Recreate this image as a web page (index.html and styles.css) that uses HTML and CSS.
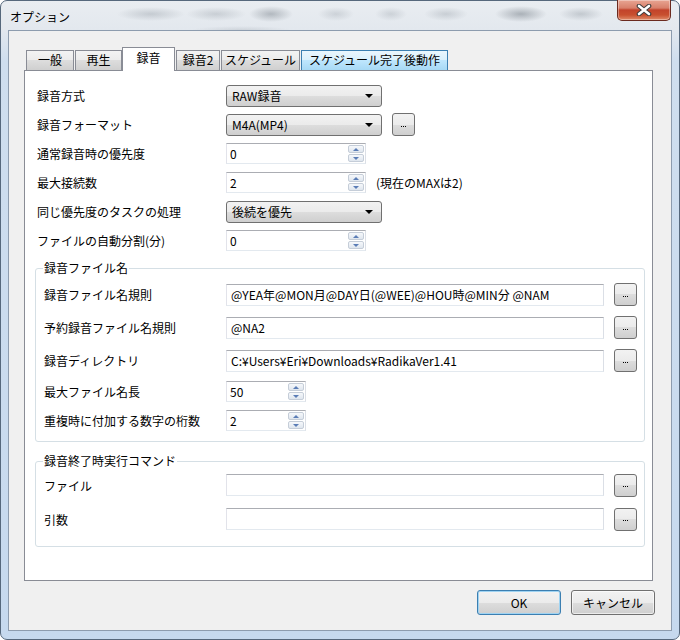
FILE: index.html
```html
<!DOCTYPE html>
<html lang="ja">
<head>
  <meta charset="UTF-8" />
  <title>オプション</title>
  <link rel="stylesheet" href="styles.css">
</head>
<body>

  <div class="window">
    <div class="titlebar">
      <span class="title">オプション</span>
      <button class="close">
        <svg width="16" height="12" viewBox="0 0 16 12">
          <path d="M3 2 L13 10 M13 2 L3 10" stroke="#3b3b3b" stroke-width="4.6" stroke-linecap="round"/>
          <path d="M3 2 L13 10 M13 2 L3 10" stroke="#ffffff" stroke-width="2.6" stroke-linecap="round"/>
        </svg>
      </button>
    </div>

    <div class="client">
      <div class="tabs">
        <div class="tab w-ippan">一般</div>
        <div class="tab w-saisei">再生</div>
        <div class="tab active">録音</div>
        <div class="tab w-rokuon2">録音2</div>
        <div class="tab w-sched">スケジュール</div>
        <div class="tab hover w-after">スケジュール完了後動作</div>
      </div>

      <div class="panel">
        <div class="rows">
          <div class="row">
            <label>録音方式</label>
            <div class="combo">RAW録音</div>
          </div>
          <div class="row">
            <label>録音フォーマット</label>
            <div class="combo">M4A(MP4)</div>
            <button class="dots"><span></span><span></span><span></span></button>
          </div>
          <div class="row">
            <label>通常録音時の優先度</label>
            <div class="spin"><span class="val">0</span><span class="updown"><i class="up"></i><i class="down"></i></span></div>
          </div>
          <div class="row">
            <label>最大接続数</label>
            <div class="spin"><span class="val">2</span><span class="updown"><i class="up"></i><i class="down"></i></span></div>
            <span class="note">(現在のMAXは2)</span>
          </div>
          <div class="row">
            <label>同じ優先度のタスクの処理</label>
            <div class="combo">後続を優先</div>
          </div>
          <div class="row">
            <label>ファイルの自動分割(分)</label>
            <div class="spin"><span class="val">0</span><span class="updown"><i class="up"></i><i class="down"></i></span></div>
          </div>
        </div>

        <fieldset class="group">
          <legend>録音ファイル名</legend>
          <div class="frow">
            <label>録音ファイル名規則</label>
            <div class="text">@YEA年@MON月@DAY日(@WEE)@HOU時@MIN分 @NAM</div>
            <button class="dots"><span></span><span></span><span></span></button>
          </div>
          <div class="frow">
            <label>予約録音ファイル名規則</label>
            <div class="text">@NA2</div>
            <button class="dots"><span></span><span></span><span></span></button>
          </div>
          <div class="frow">
            <label>録音ディレクトリ</label>
            <div class="text">C:¥Users¥Eri¥Downloads¥RadikaVer1.41</div>
            <button class="dots"><span></span><span></span><span></span></button>
          </div>
          <div class="frow short">
            <label>最大ファイル名長</label>
            <div class="spin small"><span class="val">50</span><span class="updown"><i class="up"></i><i class="down"></i></span></div>
          </div>
          <div class="frow short">
            <label>重複時に付加する数字の桁数</label>
            <div class="spin small"><span class="val">2</span><span class="updown"><i class="up"></i><i class="down"></i></span></div>
          </div>
        </fieldset>

        <fieldset class="group second">
          <legend>録音終了時実行コマンド</legend>
          <div class="frow tall">
            <label>ファイル</label>
            <div class="text"></div>
            <button class="dots"><span></span><span></span><span></span></button>
          </div>
          <div class="frow tall">
            <label>引数</label>
            <div class="text"></div>
            <button class="dots"><span></span><span></span><span></span></button>
          </div>
        </fieldset>
      </div>

      <div class="buttons">
        <button class="btn default">OK</button>
        <button class="btn">キャンセル</button>
      </div>
    </div>
  </div>

</body>
</html>
```

FILE: styles.css
```css
* {
  box-sizing: border-box;
}

body {
  margin: 0;
  width: 680px;
  height: 640px;
  overflow: hidden;
  font-family: "Noto Sans CJK JP", sans-serif;
  font-size: 12px;
  color: #000;
  background: #ffffff;
}

button {
  font-family: inherit;
  font-size: 12px;
  color: #000;
  padding: 0;
}

/* window frame (aero glass) */
.window {
  width: 680px;
  height: 640px;
  border: 1px solid #56687c;
  border-radius: 7px;
  padding: 0 7px 8px;
  display: flex;
  flex-direction: column;
  background:
    radial-gradient(ellipse 34px 7px at 150px 13px, rgba(110, 120, 130, 0.28), transparent),
    radial-gradient(ellipse 30px 7px at 215px 13px, rgba(110, 120, 130, 0.25), transparent),
    radial-gradient(ellipse 22px 8px at 270px 13px, rgba(80, 90, 100, 0.35), transparent),
    radial-gradient(ellipse 18px 7px at 335px 13px, rgba(110, 120, 130, 0.22), transparent),
    radial-gradient(ellipse 16px 7px at 390px 13px, rgba(110, 120, 130, 0.22), transparent),
    radial-gradient(ellipse 22px 7px at 445px 13px, rgba(110, 120, 130, 0.25), transparent),
    radial-gradient(ellipse 26px 8px at 520px 13px, rgba(80, 90, 100, 0.4), transparent),
    radial-gradient(ellipse 22px 7px at 580px 13px, rgba(110, 120, 130, 0.3), transparent),
    radial-gradient(ellipse 50px 4px at 240px 29px, rgba(110, 120, 130, 0.18), transparent),
    linear-gradient(#e9edf1 0, #e3e8ee 28px, #cfdeee 60px, #c6d9ee 100%);
}

.titlebar {
  height: 29px;
  display: flex;
  align-items: flex-start;
}

.title {
  margin: 8px 0 0 2px;
  font-size: 12px;
  line-height: 16px;
}

.close {
  margin: -1px 1px 0 auto;
  width: 54px;
  height: 21px;
  border: 1px solid #6b2a1f;
  border-top: none;
  border-radius: 0 0 5px 5px;
  background: linear-gradient(#e8a593 0, #d8806b 40%, #c2432b 50%, #c8502f 75%, #e08c6a 100%);
  box-shadow: inset 0 0 0 1px rgba(255, 255, 255, 0.35);
  display: flex;
  align-items: center;
  justify-content: center;
}

/* client area */
.client {
  flex: 1;
  border: 1px solid #8d9cae;
  background: #f0f0f0;
  display: flex;
  flex-direction: column;
  padding: 16px 18px 15px 15px;
}

.tabs {
  height: 24px;
  margin-bottom: -1px;
  padding-left: 2px;
  display: flex;
  align-items: flex-end;
  position: relative;
  z-index: 1;
}

.tab {
  height: 20px;
  margin: 0 1px 1px 0;
  border: 1px solid #898c95;
  border-bottom: none;
  background: linear-gradient(#f3f3f3, #ebebeb 50%, #dddddd 50%, #cfcfcf);
  text-align: center;
  line-height: 18px;
  white-space: nowrap;
}

.tab.active {
  height: 24px;
  width: 53px;
  margin: 0 1px 0 -1px;
  background: #ffffff;
  line-height: 20px;
  position: relative;
  z-index: 2;
}

.tab.hover {
  border-color: #3c7fb1;
  background: linear-gradient(#eaf6fd, #d9f0fc 50%, #bee6fd 50%, #a7d9f5);
}

.w-ippan { width: 48px; }
.w-saisei { width: 47px; }
.w-rokuon2 { width: 44px; }
.w-sched { width: 79px; }
.w-after { width: 147px; }

.panel {
  flex: 1;
  border: 1px solid #898c95;
  background: #ffffff;
  padding: 10px 7px 0 10px;
}

.rows {
  padding-left: 2px;
}

.row {
  height: 29px;
  display: flex;
  align-items: center;
}

.row label {
  width: 189px;
  flex: none;
}

/* controls */
.combo {
  width: 156px;
  height: 22px;
  border: 1px solid #707070;
  border-radius: 3px;
  background: linear-gradient(#f2f2f2, #ebebeb 50%, #dddddd 50%, #cfcfcf);
  padding-left: 5px;
  line-height: 20px;
  position: relative;
}

.combo::after {
  content: "";
  position: absolute;
  right: 8px;
  top: 8px;
  border-left: 4px solid transparent;
  border-right: 4px solid transparent;
  border-top: 4px solid #000;
}

.dots {
  width: 23px;
  height: 23px;
  margin-left: 10px;
  border: 1px solid #707070;
  border-radius: 3px;
  background: linear-gradient(#f2f2f2, #ebebeb 50%, #dddddd 50%, #cfcfcf);
  display: flex;
  justify-content: center;
  align-items: center;
  gap: 1px;
  padding-top: 3px;
}

.dots span {
  width: 1px;
  height: 1px;
  background: #000;
}

.spin {
  width: 140px;
  height: 21px;
  border: 1px solid #abadb3;
  border-color: #abadb3 #dbdfe6 #e3e9ef #e2e3ea;
  background: #ffffff;
  display: flex;
  align-items: center;
  padding: 0 1px 0 3px;
}

.spin.small {
  width: 80px;
}

.spin .val {
  flex: 1;
  line-height: 19px;
}

.updown {
  width: 16px;
  height: 17px;
  display: flex;
  flex-direction: column;
  gap: 1px;
}

.updown i {
  flex: 1;
  border: 1px solid #c5cdd8;
  border-radius: 2px;
  background: linear-gradient(#f6f8fb, #dfe6ee);
  position: relative;
}

.updown i::after {
  content: "";
  position: absolute;
  left: 4px;
  border-left: 3px solid transparent;
  border-right: 3px solid transparent;
}

.updown .up::after {
  top: 2px;
  border-bottom: 3px solid #5b7db6;
}

.updown .down::after {
  top: 2px;
  border-top: 3px solid #5b7db6;
}

.note {
  margin-left: 10px;
}

.text {
  width: 378px;
  height: 22px;
  border: 1px solid #abadb3;
  border-color: #abadb3 #dbdfe6 #e3e9ef #e2e3ea;
  background: #ffffff;
  padding-left: 4px;
  line-height: 20px;
  white-space: nowrap;
}

/* group boxes */
.group {
  margin: 6px 0 0;
  border: 1px solid #d5dfe5;
  border-radius: 3px;
  padding: 3px 7px 6px 8px;
}

.group legend {
  padding: 0 1px;
  margin-left: -1px;
  line-height: 14px;
}

.group.second {
  margin-top: 12px;
  padding-top: 0;
  padding-bottom: 10px;
}

.frow {
  height: 33px;
  display: flex;
  align-items: center;
}

.frow.short {
  height: 29px;
}

.frow.tall {
  height: 34px;
}

.frow label {
  width: 182px;
  flex: none;
  white-space: nowrap;
}

/* bottom buttons */
.buttons {
  margin: 9px -2px 0 0;
  display: flex;
  justify-content: flex-end;
  gap: 10px;
}

.btn {
  width: 84px;
  height: 25px;
  border: 1px solid #707070;
  border-radius: 3px;
  background: linear-gradient(#f2f2f2, #ebebeb 50%, #dddddd 50%, #cfcfcf);
  box-shadow: inset 0 0 0 1px rgba(255, 255, 255, 0.6);
}

.btn.default {
  border-color: #3c7fb1;
  box-shadow: inset 0 0 0 1px #9fd3f2;
}
```
